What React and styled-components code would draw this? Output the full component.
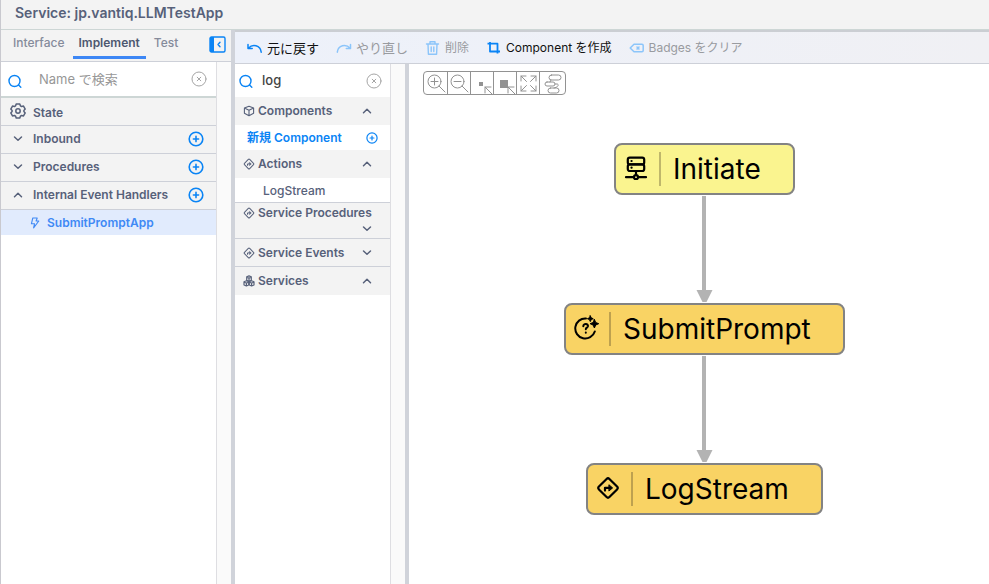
import React from "react";
import styled, { createGlobalStyle } from "styled-components";

const slate = "#57617a";
const blue = "#0a84f5";
const line = "#cdd0d8";

const GlobalStyle = createGlobalStyle`
  * { box-sizing: border-box; }
  body { margin: 0; background: #fff; }
  body, button, input { font-family: Inter, "Noto Sans CJK JP", sans-serif; }
  button { margin: 0; padding: 0; border: 0; background: none; color: inherit; cursor: pointer; }
  svg { display: block; flex: none; }
`;

/* ---------- icons ---------- */

const Icon = ({ size = 16, box = 24, weight = 2, children }) => (
  <svg width={size} height={size} viewBox={`0 0 ${box} ${box}`} fill="none" stroke="currentColor"
    strokeWidth={weight} strokeLinecap="round" strokeLinejoin="round" aria-hidden="true">
    {children}
  </svg>
);

const SearchIcon = () => (
  <Icon size={14} box={14} weight={1.4}><circle cx="6.5" cy="7" r="5.5" /><path d="M10.6 11.1 12.8 13.2" /></Icon>
);
const ClearIcon = () => (
  <Icon size={16} box={16} weight={1}><circle cx="8" cy="8" r="7" /><path d="m6.2 6.2 3.6 3.6m0-3.6L6.2 9.8" /></Icon>
);
const PlusIcon = ({ size = 16 }) => (
  <Icon size={size} box={16} weight={1.6}><circle cx="8" cy="8" r="6.8" /><path d="M8 5.4v5.2M5.4 8h5.2" /></Icon>
);
const Chevron = ({ up }) => (
  <Icon size={10} box={10} weight={1.5}><path d={up ? "m1.5 6.7 3.5-3.4 3.5 3.4" : "M1.5 3 5 6.2 8.5 3"} /></Icon>
);
const GearIcon = () => (
  <Icon size={16} box={16} weight={1.5}>
    <path d="M6.2 1h3.6l.6 1.8 1.2.7 1.9-.4 1.7 3L13.9 7.5v1l1.3 1.4-1.7 3-1.9-.4-1.2.7-.6 1.8H6.2l-.6-1.8-1.2-.7-1.9.4-1.7-3 1.3-1.4v-1L.8 6.1l1.7-3 1.9.4 1.2-.7z" />
    <circle cx="8" cy="8" r="2.2" />
  </Icon>
);
const CollapseIcon = () => (
  <Icon size={17} box={17} weight={1.4}>
    <rect x="1" y="1" width="15" height="15" rx="1.5" />
    <path d="M1 1h4v15H1z" fill="currentColor" stroke="none" />
    <path d="m11 6.2-2 2.3 2 2.3" />
  </Icon>
);
const BoltIcon = () => (
  <Icon size={12} box={12} weight={1.1}><path d="M3.8 1h4.4L7.1 4h2.7L4.6 10.8l.9-4H2.4z" /></Icon>
);
const CubeIcon = () => (
  <Icon size={12} box={12} weight={1.1}><path d="m6 1.2 4.6 1.9v5.2L6 10.8 1.4 8.3V3.1zM1.4 3.1 6 5.2l4.6-2.1M6 5.2v5.6" /></Icon>
);
const ActionIcon = ({ size = 12, weight = 2 }) => (
  <Icon size={size} box={24} weight={weight}>
    <rect x="4.6" y="4.6" width="14.8" height="14.8" rx="2" transform="rotate(45 12 12)" />
    <path d="M9 14.6v-2.8h5" /><path d="m13.2 9 3.4 2.9-3.4 2.9z" fill="currentColor" strokeWidth="1" />
  </Icon>
);
const ServicesIcon = () => (
  <Icon size={12} box={12} weight={1.2}>
    <path d="M3.7 1.8 6 .9l2.3.9v3.4L6 6.2l-2.3-1zM1 6.7l2.4-.9 2.3.9V10l-2.3 1L1 10zM6.3 6.7l2.3-.9 2.4.9V10l-2.4 1-2.3-1zM3.7 2.2 6 3.1l2.3-.9M6 3.1v2.7M1 7.2l2.4.8 2.3-.8M3.4 8v2.8M6.3 7.2l2.3.8 2.4-.8M8.6 8v2.8" />
  </Icon>
);
const UndoIcon = () => (
  <Icon size={16} box={16} weight={1.5}><path d="M1 4.5v4h4.2M1.4 8.2C5.5 3.8 13.4 5 14.2 12.2" /></Icon>
);
const RedoIcon = () => (
  <Icon size={16} box={16} weight={1.5}><path d="M14.5 4.5v4h-4.2M14.1 8.2C10 3.8 2.1 5 1.3 12.2" /></Icon>
);
const TrashIcon = () => (
  <Icon size={16} box={16} weight={1.4}><path d="M1.5 4h12M5 3.8V1.8h5v2M3 4l.4 10.2h8.2L12 4M6.2 7v4.5M8.8 7v4.5" /></Icon>
);
const CropIcon = () => (
  <Icon size={16} box={16} weight={1.8}><path d="M4 2v9.5h10M1.5 3.7h10V13.5" strokeLinecap="butt" /></Icon>
);
const BadgeIcon = () => (
  <Icon size={16} box={16} weight={1.5}><path d="M5 4.2h8q1.2 0 1.2 1.2v5.2q0 1.2-1.2 1.2H5L1.2 8zM8 7l2 2m0-2L8 9" /></Icon>
);

const zoomTools = [
  { label: "Zoom in", art: <><circle cx="10.5" cy="9.5" r="6.5" /><path d="m15 14 6 6M10.5 6v7M7 9.5h7" /></> },
  { label: "Zoom out", art: <><circle cx="9.5" cy="9.5" r="6.5" /><path d="m14 14 6 6M6 9.5h7" /></> },
  { label: "Reset zoom", art: <><path d="M8 10h4v4H8z" fill="currentColor" stroke="none" /><path d="m21 22-7-7m0 6v-6h6" /></> },
  { label: "Fit selection", art: <><path d="M6 8h8v8H6z" fill="currentColor" stroke="none" /><path d="m21 22-7-7m0 6v-6h6" /></> },
  { label: "Fit to window", art: <path d="M4 9V4h5M4 4l5.5 5.5M14 4h5v5M19 4l-5.5 5.5M4 14v5h5M4 19l5.5-5.5M19 14v5h-5M19 19l-5.5-5.5" /> },
  { label: "Auto layout", art: <><rect x="8" y="3" width="12" height="5" rx="2.5" /><rect x="4" y="10" width="10" height="4" rx="2" /><rect x="7" y="16" width="11" height="5" rx="2.5" /><path d="M10 8 9 10M14 12h2c2 0 2 3-3 4" /></> },
];

const ServerIcon = () => (
  <Icon size={24} box={24} weight={2.2}>
    <rect x="3.8" y="1.6" width="16.4" height="6.8" rx="2" /><rect x="3.8" y="8.4" width="16.4" height="6.6" rx="2" />
    <path d="M7.5 5h.1M7.5 11.7h.1M12 15v4M2 21.2h7.5M14.5 21.2H22" /><circle cx="12" cy="21.2" r="2" />
  </Icon>
);
const PromptIcon = () => (
  <Icon size={26} box={26} weight={2}>
    <path d="M12 3.5A10 10 0 1 0 20.8 16.5" />
    <path d="M9.3 11.3c0-3.4 5.4-2.7 4.6.2-.4 1.2-2.1 1.2-2.1 2.7M11.8 17.6v.1" />
    <path d="m16.3.8.9 2 2 .9-2 .9-.9 2-.9-2-2-.9 2-.9zM20.4 4.5l1.3 3 3 1.2-3 1.3-1.3 3-1.3-3-3-1.3 3-1.2z" fill="currentColor" strokeWidth="1" />
  </Icon>
);

/* ---------- frame ---------- */

const Page = styled.div`
  min-height: 100vh; display: flex; flex-direction: column;
  border-left: 1px solid #c9c9cf; color: ${slate};
`;
const TitleBar = styled.header`
  height: 30px; display: flex; align-items: center; padding: 0 14px 4px;
  background: #f3f3f3; border-bottom: 1px solid #cdd6d5;
`;
const Title = styled.h1`margin: 0; font-size: 14px; line-height: 20px; font-weight: 600;`;
const Workspace = styled.div`flex: 1; display: flex; align-items: stretch;`;
const Sidebar = styled.aside`
  width: 234px; flex: none; display: flex; flex-direction: column; border-right: 4px solid #d0d3da;
`;
const Main = styled.main`
  flex: 1; min-width: 0; display: flex; flex-direction: column; border-top: 2px solid #cbced3;
`;
const Row = styled.div`flex: 1; display: flex; align-items: stretch;`;
const Column = styled.div`flex: 1; min-width: 0; border-right: 1px solid #dedee2;`;
const Gutter = styled.div`width: 14px; flex: none; background: #fafafa;`;

/* ---------- sidebar ---------- */

const Tabs = styled.div`
  height: 32px; display: flex; align-items: stretch; padding: 0 5px 2px 4px;
  background: #f3f3f3; border-bottom: 1px solid ${line};
`;
const Tab = styled.button`
  padding: ${p => (p.$active ? "0 6px" : "0 8px 3px")};
  font-size: 12px; line-height: 16px; font-weight: ${p => (p.$active ? 600 : 500)};
  color: ${p => (p.$active ? "#4d5870" : "#858b9b")};
  border-bottom: ${p => (p.$active ? "3px solid #3d87f5" : "0")};
`;
const IconButton = styled.button`
  display: flex; align-items: center; justify-content: center; flex: none; color: ${p => p.$color || blue};
`;
const CollapseButton = styled(IconButton)`margin-left: auto;`;

const SearchBox = styled.div`
  height: ${p => (p.$ruled ? 36 : 33)}px; display: flex; align-items: center; gap: ${p => (p.$ruled ? 17 : 9)}px;
  padding: 0 ${p => (p.$ruled ? 9 : 8)}px 0 ${p => (p.$ruled ? 7 : 4)}px; color: ${blue}; background: #fff;
  border-bottom: ${p => (p.$ruled ? "2px solid #cdd6d5" : "0")};
  > svg { margin-top: ${p => (p.$ruled ? 4 : 1)}px; }
`;
const SearchInput = styled.input`
  flex: 1; min-width: 0; height: 24px; padding: 0 0 1px; border: 0; outline: 0; background: transparent;
  font-size: 13px; font-weight: 500; color: #444;
  &::placeholder { color: #979797; opacity: 1; font-weight: 400; }
`;

const Section = styled.div`
  min-height: 28px; display: flex; align-items: center; gap: 10px; padding: ${p => (p.$lead ? "2px 12px 0" : "0 12px 1px")};
  background: #f3f3f3; border-bottom: 1px solid ${line}; font-size: 12px; line-height: 16px; font-weight: 600;
`;
const SectionToggle = styled.button`
  flex: 1; display: flex; align-items: center; gap: 10px; text-align: left; font: inherit;
`;
const LeadIcon = styled.span`width: 10px; display: flex; justify-content: center; padding-bottom: 4px;`;
const HandlerItem = styled.button`
  width: 100%; height: 25px; display: flex; align-items: center; gap: 6px; padding-left: 28px;
  background: #e1ebfd; color: #3f89f5; font-size: 12px; line-height: 16px; font-weight: 600;
`;

/* ---------- main area ---------- */

const Toolbar = styled.div`
  height: 32px; display: flex; align-items: center; gap: 17px; padding: 0 12px;
  background: linear-gradient(90deg, #edf1fa, #f0f0f4); border-bottom: 1px solid ${line};
`;
const ToolButton = styled.button`
  display: flex; align-items: center; gap: 4px; line-height: 18px; white-space: nowrap;
  font-size: ${p => (p.$large ? 13 : 12)}px; font-weight: 400; color: #111;
  svg { color: ${blue}; }
  &:disabled { color: #999ba0; svg { color: #8cc5fa; } }
`;
const Palette = styled.section`
  width: 174px; flex: none; display: flex; border-right: 4px solid #d0d3da;
`;
const Group = styled.button`
  width: 100%; min-height: ${p => (p.$tall ? 36 : 28)}px; display: flex; flex-wrap: wrap; align-items: center; gap: 0 3px;
  padding: 0 18px ${p => (p.$tall ? 2 : 0)}px 8px; background: #f3f3f3; text-align: left;
  font-size: 12px; line-height: 16px; font-weight: 600;
  border-bottom: ${p => (p.$ruled ? `1px solid ${line}` : "0")};
`;
const GroupChevron = styled.span`margin-left: auto;`;
const PaletteItem = styled.div`
  height: 25px; display: flex; align-items: center; justify-content: space-between;
  padding: 1px 12px 0 ${p => (p.$strong ? 12 : 28)}px; font-size: 12px; line-height: 16px;
  font-weight: ${p => (p.$strong ? 600 : 500)}; color: ${p => (p.$strong ? blue : slate)};
  border-bottom: ${p => (p.$ruled ? `1px solid ${line}` : "0")};
`;

/* ---------- canvas ---------- */

const Canvas = styled.section`flex: 1; min-width: 0; position: relative; background: #fff; overflow: hidden;`;
const ZoomBar = styled.div`
  display: inline-flex; margin: 7px 14px; border: 1px solid #929292; border-radius: 4px; color: #929292;
`;
const ZoomButton = styled.button`
  width: 23px; height: 22px; display: flex; align-items: center; justify-content: center; overflow: hidden;
  & + & { border-left: 1px solid #929292; }
  &:last-child { width: 26px; }
`;
const Edges = styled.svg`position: absolute; left: 0; top: 0; pointer-events: none;`;
const Node = styled.div`
  position: absolute; left: ${p => p.$x}px; top: ${p => p.$y}px; height: 52px;
  display: flex; align-items: center; padding: 0 32px 0 8px;
  background: ${p => p.$fill}; border: 2px solid #838383; border-radius: 8px; color: #000;
`;
const NodeIcon = styled.span`
  width: 37px; height: 34px; display: flex; align-items: center; padding-bottom: 2px;
  border-right: 2px solid rgba(80, 70, 40, 0.35);
`;
const NodeLabel = styled.span`padding-left: 12px; font-size: 28px; line-height: 34px; white-space: nowrap;`;

const sections = [
  { name: "Inbound" },
  { name: "Procedures" },
  { name: "Internal Event Handlers", open: true },
];

const nodes = [
  { name: "Initiate", x: 205, y: 79, fill: "#faf48f", icon: <ServerIcon /> },
  { name: "SubmitPrompt", x: 155, y: 239, fill: "#f9d364", icon: <PromptIcon /> },
  { name: "LogStream", x: 177, y: 399, fill: "#f9d364", icon: <ActionIcon size={24} weight={2.2} /> },
];

const PaletteGroup = ({ name, icon, open, ...rest }) => (
  <Group {...rest} aria-expanded={!!open}>
    {icon}
    <span>{name}</span>
    <GroupChevron><Chevron up={open} /></GroupChevron>
  </Group>
);

export default function App() {
  return (
    <Page>
      <GlobalStyle />
      <TitleBar><Title>Service: jp.vantiq.LLMTestApp</Title></TitleBar>
      <Workspace>
        <Sidebar>
          <Tabs>
            <Tab>Interface</Tab>
            <Tab $active>Implement</Tab>
            <Tab>Test</Tab>
            <CollapseButton aria-label="Collapse panel"><CollapseIcon /></CollapseButton>
          </Tabs>
          <Row>
            <Column>
              <SearchBox $ruled>
                <SearchIcon />
                <SearchInput aria-label="Name で検索" placeholder="Name で検索" />
                <IconButton $color="#a5a5a5" aria-label="Clear"><ClearIcon /></IconButton>
              </SearchBox>
              <Section $lead>
                <LeadIcon><GearIcon /></LeadIcon>
                <span>State</span>
              </Section>
              {sections.map(s => (
                <Section key={s.name}>
                  <SectionToggle aria-expanded={!!s.open}><Chevron up={s.open} />{s.name}</SectionToggle>
                  <IconButton aria-label={`Add ${s.name}`}><PlusIcon /></IconButton>
                </Section>
              ))}
              <HandlerItem><BoltIcon />SubmitPromptApp</HandlerItem>
            </Column>
            <Gutter />
          </Row>
        </Sidebar>
        <Main>
          <Toolbar>
            <ToolButton $large><UndoIcon />元に戻す</ToolButton>
            <ToolButton $large disabled><RedoIcon />やり直し</ToolButton>
            <ToolButton disabled><TrashIcon />削除</ToolButton>
            <ToolButton><CropIcon />Component を作成</ToolButton>
            <ToolButton disabled><BadgeIcon />Badges をクリア</ToolButton>
          </Toolbar>
          <Row>
            <Palette>
              <Column>
                <SearchBox>
                  <SearchIcon />
                  <SearchInput aria-label="Search components" defaultValue="log" />
                  <IconButton $color="#a5a5a5" aria-label="Clear"><ClearIcon /></IconButton>
                </SearchBox>
                <PaletteGroup name="Components" icon={<CubeIcon />} open />
                <PaletteItem $strong>
                  <span>新規 Component</span>
                  <IconButton aria-label="新規 Component"><PlusIcon size={12} /></IconButton>
                </PaletteItem>
                <PaletteGroup name="Actions" icon={<ActionIcon />} open />
                <PaletteItem $ruled>LogStream</PaletteItem>
                <PaletteGroup name="Service Procedures" icon={<ActionIcon />} $tall $ruled />
                <PaletteGroup name="Service Events" icon={<ActionIcon />} $ruled />
                <PaletteGroup name="Services" icon={<ServicesIcon />} open />
              </Column>
              <Gutter />
            </Palette>
            <Canvas>
              <ZoomBar>
                {zoomTools.map(t => (
                  <ZoomButton key={t.label} aria-label={t.label}>
                    <Icon size={23} box={23} weight={1}>{t.art}</Icon>
                  </ZoomButton>
                ))}
              </ZoomBar>
              <Edges width="320" height="400" aria-hidden="true">
                {[132, 292].map(y => (
                  <g key={y} fill="#b3b3b3">
                    <rect x="293" y={y} width="4" height="96" />
                    <path d={`M287.5 ${y + 94}h16l-6 12h-4z`} />
                  </g>
                ))}
              </Edges>
              {nodes.map(n => (
                <Node key={n.name} $x={n.x} $y={n.y} $fill={n.fill}>
                  <NodeIcon>{n.icon}</NodeIcon>
                  <NodeLabel>{n.name}</NodeLabel>
                </Node>
              ))}
            </Canvas>
          </Row>
        </Main>
      </Workspace>
    </Page>
  );
}
